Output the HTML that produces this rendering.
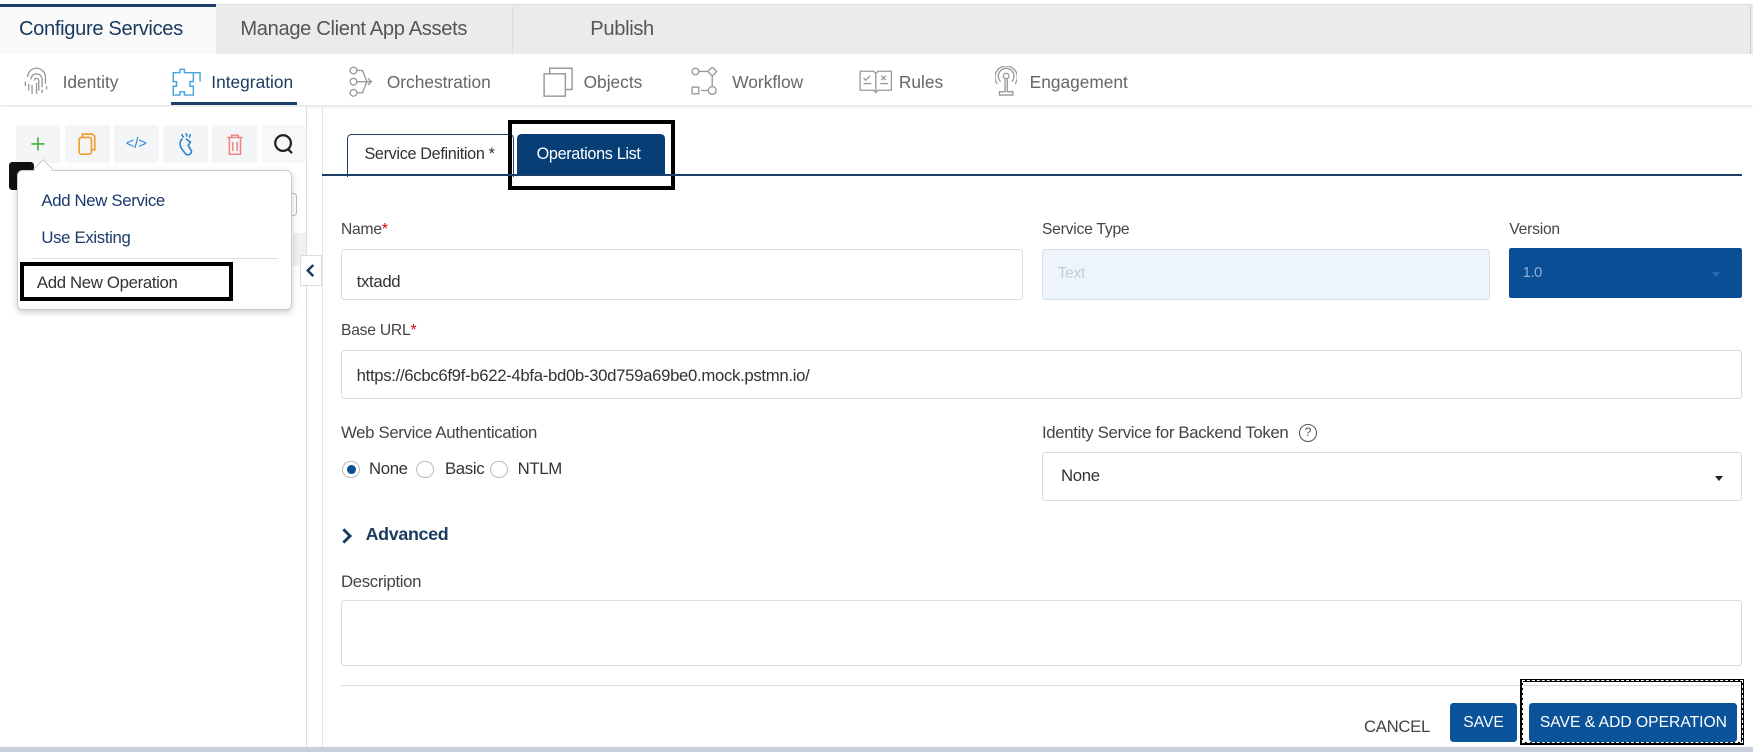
<!DOCTYPE html>
<html><head><meta charset="utf-8"><style>
html,body{margin:0;padding:0;background:#fff;overflow:hidden}
body{width:1753px;height:752px}
#w{zoom:1.118;width:1568px;height:673px;position:relative;font-family:"Liberation Sans",sans-serif;color:#333}
.a{position:absolute}
.t{font-size:14.5px;white-space:nowrap;letter-spacing:-0.3px}
.lbl{font-size:14px;color:#444;letter-spacing:-0.2px}
.inp{border:1px solid #d9dde2;border-radius:3px;background:#fff;box-sizing:border-box}
.tb{width:40px;height:34px;background:#f4f5f6;border-radius:2px;top:112px;display:flex;align-items:center;justify-content:center}
.nav{font-size:15.5px;color:#666;top:64px}
.radio{width:16px;height:16px;border:1.5px solid #bbb;border-radius:50%;box-sizing:border-box;background:#fff}
</style></head><body><div id="w">
<div class="a" style="left:0;top:0;width:1568px;height:4px;background:#fff"></div>
<div class="a" style="left:0;top:4px;width:1568px;height:44px;background:#ebebeb;border-top:1px solid #ddd;box-sizing:border-box"></div>
<div class="a" style="left:0;top:4px;width:193px;height:44px;background:#fafafa;border-top:3px solid #1b3f6b;box-sizing:border-box"></div>
<div class="a t" style="left:17px;top:16px;font-size:18px;color:#1a3a5e">Configure Services</div>
<div class="a" style="left:458px;top:5px;width:1px;height:43px;background:#ddd"></div>
<div class="a t" style="left:215px;top:16px;font-size:18px;color:#555">Manage Client App Assets</div>
<div class="a t" style="left:528px;top:16px;font-size:18px;color:#555">Publish</div>
<div class="a" style="left:1565px;top:5px;width:1px;height:90px;background:#ccc"></div>
<div class="a" style="left:0;top:48px;width:1568px;height:46px;background:#fff;box-shadow:0 2px 3px rgba(0,0,0,.12)"></div>
<svg class="a" style="left:20px;top:59px" width="26" height="28" viewBox="0 0 26 28" fill="none" stroke="#999" stroke-width="1.2"><path d="M5 10a8 8 0 0 1 16 0v6M8 12a5 5 0 0 1 10 0v7M11 13a2 2 0 0 1 4 0v9M3 14v4M6 16v6M9 17v8M13 15v10M18 21v3M22 18v3"/></svg>
<div class="a nav" style="left:56px">Identity</div>
<svg class="a" style="left:153px;top:59px" width="28" height="28" viewBox="0 0 28 28" fill="none" stroke="#4aa3df" stroke-width="1.3"><path d="M2 6h6V3h4v3h8v8h-3v4h3v8H12v-3H8v3H2v-8h3v-4H2z"/><path d="M20 6h6v8"/></svg>
<div class="a nav" style="left:189px;color:#1a3a5e">Integration</div>
<div class="a" style="left:153px;top:91px;width:113px;height:3px;background:#1b3f6b"></div>
<svg class="a" style="left:312px;top:59px" width="24" height="28" viewBox="0 0 24 28" fill="none" stroke="#999" stroke-width="1.2"><circle cx="4" cy="4" r="3"/><circle cx="4" cy="14" r="3"/><circle cx="4" cy="24" r="3"/><path d="M7 4h5l4 10-4 10H7M7 14h13M17 11l3 3-3 3"/></svg>
<div class="a nav" style="left:346px">Orchestration</div>
<svg class="a" style="left:486px;top:59px" width="28" height="28" viewBox="0 0 28 28" fill="none" stroke="#999" stroke-width="1.3"><rect x="1" y="7" width="19" height="20"/><path d="M6 7V2h20v19h-6"/></svg>
<div class="a nav" style="left:522px">Objects</div>
<svg class="a" style="left:618px;top:60px" width="26" height="26" viewBox="0 0 26 26" fill="none" stroke="#999" stroke-width="1.2"><circle cx="4" cy="4" r="3"/><path d="M7 4h8M19 0l4 4-4 4-4-4zM19 8v9"/><rect x="1" y="18" width="6" height="6"/><circle cx="19" cy="21" r="3.5"/><path d="M9 21h6"/></svg>
<div class="a nav" style="left:655px">Workflow</div>
<svg class="a" style="left:768px;top:62px" width="30" height="22" viewBox="0 0 30 22" fill="none" stroke="#999" stroke-width="1.2"><path d="M1 2h12l2 2 2-2h12v17H17l-2 2-2-2H1zM15 4v17M4 8l2 2 4-4M4 13h7M20 6l4 4M24 6l-4 4M19 13h7"/></svg>
<div class="a nav" style="left:804px">Rules</div>
<svg class="a" style="left:890px;top:59px" width="20" height="28" viewBox="0 0 20 28" fill="none" stroke="#999" stroke-width="1.2"><circle cx="10" cy="9" r="2.5"/><path d="M5 14a7 7 0 1 1 10 0M2 16a10 10 0 1 1 16 0M9 12v11H4v3h12v-3h-5V12"/></svg>
<div class="a nav" style="left:921px">Engagement</div>
<div class="a" style="left:0;top:96px;width:274px;height:572px;background:#fff"></div>
<div class="a" style="left:274px;top:96px;width:1px;height:572px;background:#ddd"></div>
<div class="a" style="left:288px;top:96px;width:1px;height:572px;background:#e5e5e5"></div>
<div class="a tb" style="left:14px;color:#5cb85c;font-size:24px;font-weight:300">+</div>
<div class="a tb" style="left:58px"><svg width="16" height="20" viewBox="0 0 16 20" fill="none" stroke="#f0a030" stroke-width="1.5"><rect x="1" y="4" width="11" height="15" rx="2"/><path d="M4 4V1h9l2 2v12h-3"/></svg></div>
<div class="a tb" style="left:102px;color:#2a7fd4;font-size:13px">&lt;/&gt;</div>
<div class="a tb" style="left:146px"><svg width="16" height="22" viewBox="0 0 16 22" fill="none" stroke="#2a7fd4" stroke-width="1.4"><path d="M5 6c-3 2-3 7 0 10l3 4c2 1 5 0 5-3l-3-5 2-3-4-3M8 1l1 3M12 2l-1 3M4 2l2 3"/></svg></div>
<div class="a tb" style="left:190px"><svg width="16" height="20" viewBox="0 0 16 20" fill="none" stroke="#e88" stroke-width="1.4"><path d="M1 4h14M5 4V2h6v2M3 4v15h10V4M6 8v8M10 8v8"/></svg></div>
<div class="a tb" style="left:234px;background:#f8f8f8"><svg width="20" height="20" viewBox="0 0 20 20" fill="none" stroke="#222" stroke-width="2"><circle cx="9" cy="9" r="7"/><path d="M13 14l4 4"/></svg></div>
<div class="a" style="left:8px;top:145px;width:22px;height:25px;background:#111;border-radius:3px"></div>
<div class="a" style="left:261px;top:173px;width:4px;height:18px;border:1px solid #bbb;border-left:0;border-radius:0 3px 3px 0"></div>
<div class="a" style="left:262px;top:208px;width:12px;height:30px;background:#f0f0f0"></div>
<div class="a" style="left:268px;top:228px;width:20px;height:28px;background:#fff;border:1px solid #ddd;box-sizing:border-box"><svg width="18" height="26" viewBox="0 0 18 26"><path d="M11 8l-5 5 5 5" fill="none" stroke="#1a3a5e" stroke-width="2.2"/></svg></div>
<div class="a" style="left:15px;top:152px;width:246px;height:125px;background:#fff;border:1px solid #ccc;border-radius:5px;box-shadow:0 2px 6px rgba(0,0,0,.2);box-sizing:border-box"></div>
<div class="a" style="left:32px;top:145px;width:12px;height:12px;background:#fff;transform:rotate(45deg);border-left:1px solid #ccc;border-top:1px solid #ccc"></div>
<div class="a t" style="left:37px;top:171px;color:#1a3a6e;font-size:15px">Add New Service</div>
<div class="a t" style="left:37px;top:204px;color:#1a3a6e;font-size:15px">Use Existing</div>
<div class="a" style="left:29px;top:231px;width:220px;height:1px;background:#ddd"></div>
<div class="a" style="left:18px;top:234px;width:190px;height:35px;border:4px solid #000;box-sizing:border-box"></div>
<div class="a t" style="left:33px;top:244px;color:#333;font-size:15px">Add New Operation</div>
<div class="a" style="left:310px;top:120px;width:150px;height:38px;border:1px solid #1b3f6b;border-bottom:0;border-radius:4px 4px 0 0;box-sizing:border-box;background:#fff"></div>
<div class="a t" style="left:326px;top:130px;font-size:14.5px;color:#333">Service Definition *</div>
<div class="a" style="left:462px;top:120px;width:133px;height:37px;background:#063e75;border-radius:4px 4px 0 0"></div>
<div class="a t" style="left:480px;top:130px;color:#fff;font-size:14.5px">Operations List</div>
<div class="a" style="left:454px;top:107px;width:150px;height:63px;border:4px solid #000;box-sizing:border-box"></div>
<div class="a" style="left:288px;top:156px;width:1270px;height:1px;background:#1b3f6b"></div>
<div class="a lbl" style="left:305px;top:198px">Name<span style="color:#d00">*</span></div>
<div class="a inp" style="left:305px;top:223px;width:610px;height:45px"></div>
<div class="a t" style="left:319px;top:243px;font-size:15px">txtadd</div>
<div class="a lbl" style="left:932px;top:198px">Service Type</div>
<div class="a inp" style="left:932px;top:223px;width:401px;height:45px;background:#eef4fb"></div>
<div class="a t" style="left:946px;top:237px;color:#c5ccd4;font-size:14px">Text</div>
<div class="a lbl" style="left:1350px;top:198px">Version</div>
<div class="a" style="left:1350px;top:222px;width:208px;height:45px;background:#0a4f95;border-radius:2px"></div>
<div class="a t" style="left:1362px;top:237px;color:#8fb0d4;font-size:13px">1.0</div>
<div class="a" style="left:1531px;top:243px;border:4px solid transparent;border-top:5px solid #2b6bb0"></div>
<div class="a lbl" style="left:305px;top:288px">Base URL<span style="color:#d00">*</span></div>
<div class="a inp" style="left:305px;top:313px;width:1253px;height:44px"></div>
<div class="a t" style="left:319px;top:327px;font-size:15px">https://6cbc6f9f-b622-4bfa-bd0b-30d759a69be0.mock.pstmn.io/</div>
<div class="a t" style="left:305px;top:378px;font-size:15px;color:#444">Web Service Authentication</div>
<div class="a radio" style="left:306px;top:412px"></div><div class="a" style="left:310px;top:416px;width:8px;height:8px;border-radius:50%;background:#0a4f95"></div>
<div class="a t" style="left:330px;top:411px;font-size:15px">None</div>
<div class="a radio" style="left:372px;top:412px"></div>
<div class="a t" style="left:398px;top:411px;font-size:15px">Basic</div>
<div class="a radio" style="left:438px;top:412px"></div>
<div class="a t" style="left:463px;top:411px;font-size:15px">NTLM</div>
<div class="a t" style="left:932px;top:378px;font-size:15px;color:#444">Identity Service for Backend Token</div>
<div class="a" style="left:1162px;top:379px;width:16px;height:16px;border:1.3px solid #555;border-radius:50%;box-sizing:border-box;font-size:11px;text-align:center;line-height:14px;color:#555">?</div>
<div class="a inp" style="left:932px;top:404px;width:626px;height:44px"></div>
<div class="a t" style="left:949px;top:417px;font-size:15px">None</div>
<div class="a" style="left:1534px;top:426px;border:4px solid transparent;border-top:5px solid #222"></div>
<svg class="a" style="left:304px;top:471px" width="12" height="16" viewBox="0 0 12 16"><path d="M3 2l6 6-6 6" fill="none" stroke="#1a3a5e" stroke-width="2.6"/></svg>
<div class="a t" style="left:327px;top:469px;font-size:16px;font-weight:bold;color:#1a3a5e">Advanced</div>
<div class="a t" style="left:305px;top:512px;font-size:15px;color:#444">Description</div>
<div class="a inp" style="left:305px;top:537px;width:1253px;height:59px"></div>
<div class="a" style="left:305px;top:613px;width:1253px;height:1px;background:#ddd"></div>
<div class="a t" style="left:1220px;top:641px;font-size:15px;color:#444">CANCEL</div>
<div class="a" style="left:1297px;top:629px;width:60px;height:35px;background:#0a5299;border-radius:3px;color:#fff;font-size:14px;text-align:center;line-height:35px">SAVE</div>
<div class="a" style="left:1368px;top:629px;width:186px;height:35px;background:#0a5299;border-radius:3px;color:#fff;font-size:14px;text-align:center;line-height:35px;white-space:nowrap">SAVE &amp; ADD OPERATION</div>
<div class="a" style="left:1360px;top:607px;width:200px;height:59px;border:3px solid #000;box-sizing:border-box"></div>
<div class="a" style="left:1361px;top:608px;width:198px;height:57px;border:1px dashed #fff;box-sizing:border-box"></div>
<div class="a" style="left:0;top:668px;width:1568px;height:5px;background:#c9cfd8"></div>
</div></body></html>
